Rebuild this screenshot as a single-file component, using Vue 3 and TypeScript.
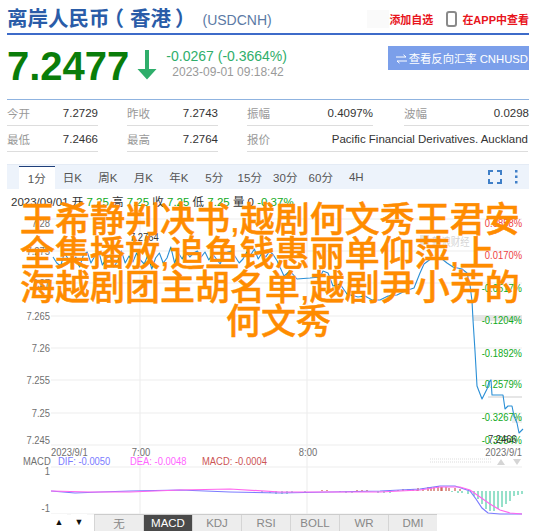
<script setup lang="ts">
const stats = [
  [['今开', '7.2729'], ['昨收', '7.2743'], ['振幅', '0.4097%'], ['波幅', '0.0298']],
  [['最低', '7.2466'], ['最高', '7.2764'], ['报价', 'Pacific Financial Derivatives. Auckland']],
]
const tabs = ['1分', '日K', '周K', '月K', '年K', '5分', '15分', '30分', '60分', '4H']
const indicators = ['无', 'MACD', 'KDJ', 'RSI', 'BOLL', 'WR', 'DMI']

const leftAxis = [
  ['7.28', 226], ['7.275', 254], ['7.27', 286], ['7.265', 319], ['7.26', 351], ['7.255', 383], ['7.25', 416], ['7.245', 443],
] as const
const rightAxis = [
  ['0.0858%', 226, 'rise'], ['0.0170%', 258, 'rise'], ['-0.0517%', 291, 'fall'], ['-0.1204%', 323, 'fall'],
  ['-0.1892%', 356, 'fall'], ['-0.2579%', 387, 'fall'], ['-0.3267%', 420, 'fall'], ['-0.3954%', 443, 'fall'],
] as const
const gridY = [218, 250, 282, 315, 347, 379, 412, 444, 466, 513]

// the chart's canvas text is drawn narrower than the font's natural width
const squeeze = (x: number, y: number) => `translate(${x} ${y}) scale(.82 1)`

const wiggle = [256, 262, 265, 252, 258, 262, 256, 266, 254, 251, 262, 255, 250, 264, 258, 254, 266, 260, 250, 262, 255, 261, 252, 259, 263, 254, 268, 257, 252, 262, 257, 246, 262, 252, 258, 250, 256, 252, 250, 256, 251, 259, 253, 258, 263, 253, 251, 250, 256, 262, 258, 251, 254, 248, 258, 252, 256, 250, 254, 260]
const head = wiggle.map((y, i) => `${53 + i * 3.8},${y}`)
const tail = [
  [284, 275], [290, 270], [297, 278], [310, 277], [320, 276], [323, 270], [328, 272], [333, 285], [340, 283], [347, 293], [358, 296],
  [365, 295], [372, 299], [380, 299], [388, 295], [397, 294], [405, 290], [414, 287], [420, 272], [424, 263], [432, 257], [442, 258],
  [447, 262], [453, 266], [462, 268], [467, 272], [470, 284], [472, 300], [473, 319], [475, 350], [477, 385], [482, 398], [487, 388], [489, 381], [491, 379],
  [492, 394], [503, 394], [505, 408], [508, 405], [512, 405], [514, 415], [517, 422], [519, 432], [523, 428],
].map(([x, y]) => `${x},${y}`)
const priceLine = [...head, ...tail].join(' ')

const magenta = '51,490 90,491 130,491 180,489 230,488 280,491 330,491 380,491 420,489 440,486 460,486 470,489 480,496 490,503 500,509 510,512 522,513'
const blue = '51,490 75,492 100,491 130,490 180,489 230,491 280,492 330,491 380,490 420,488 440,485 455,485 470,490 476,498 482,507 488,512 500,513 522,513'

const redBars = [[322, 1], [327, 1], [357, 1], [362, 1], [367, 1], [398, 1], [403, 2], [408, 2], [413, 2], [418, 3], [423, 3], [417, 1], [428, 4], [431, 4], [434, 4], [438, 5], [442, 4], [446, 4], [449, 3], [455, 3], [460, 2], [441, 4]]
const tealBars = [[262, 2], [270, 2], [276, 3], [282, 3], [287, 3], [292, 2], [305, 2], [340, 1], [346, 2], [352, 2], [378, 2], [384, 2], [390, 2], [452, 1], [458, 2], [462, 2], [468, 3], [474, 5], [478, 8], [482, 13], [486, 18], [490, 20], [494, 20], [498, 18], [502, 16], [506, 13], [510, 10], [514, 5], [518, 4], [522, 3]]

const headlineLines = ['王希静判决书,越剧何文秀王君安', '全集播放,追鱼钱惠丽单仰萍,上', '海越剧团主胡名单,越剧尹小芳的', '何文秀']
</script>

<template>
  <div class="page">
    <header class="title-row">
      <h1 class="title">离岸人民币<span class="paren-open">（</span>香港<span class="paren-close">）</span></h1>
      <span class="code">(USDCNH)</span>
      <div class="actions">
        <span class="smudge"></span>
        <span class="action-link">添加自选</span>
        <svg class="phone" width="11" height="16" viewBox="0 0 11 16">
          <rect x="1" y="1" width="9" height="14" rx="2" fill="#fff" stroke="#8a8a8a" stroke-width="2" />
        </svg>
        <span class="action-link">在APP中查看</span>
      </div>
    </header>

    <section class="quote">
      <span class="price">7.2477</span>
      <svg class="arrow" width="20" height="30" viewBox="0 0 20 30">
        <path d="M8 0h4v19h7.500L10 29.500 .5 19H8z" fill="#2fae6b" />
      </svg>
      <div class="change">
        <div class="delta">-0.0267 (-0.3664%)</div>
        <div class="time">2023-09-01 09:18:42</div>
      </div>
      <button class="reverse">
        <svg class="swap" width="11" height="10" viewBox="0 0 11 10" fill="none" stroke="#fff">
          <path d="M0 3h10L7.500 .8M11 7H1l2.500 2.200" />
        </svg>
        查看反向汇率 CNHUSD
      </button>
    </section>

    <section class="stats">
      <div v-for="(row, r) in stats" :key="r" class="stat-row">
        <div v-for="cell in row" :key="cell[0]" class="stat" :class="{ wide: cell[1].length > 10 }">
          <span class="stat-label">{{ cell[0] }}</span>
          <span class="stat-value">{{ cell[1] }}</span>
        </div>
      </div>
    </section>

    <nav class="tabs">
      <span v-for="(t, i) in tabs" :key="t" class="tab" :class="{ active: i === 0 }">{{ t }}</span>
      <div class="tab-tools">
        <svg width="14" height="14" viewBox="0 0 14 14" fill="none" stroke="#3f7fc8" stroke-width="2">
          <path d="M1 5V1h4M9 1h4v4M13 9v4H9M5 13H1V9" />
        </svg>
        <svg width="4" height="14" viewBox="0 0 4 14" fill="#3f7fc8">
          <rect x="1" y="0" width="2.500" height="2.500" />
          <rect x="1" y="5.500" width="2.500" height="2.500" />
          <rect x="1" y="11" width="2.500" height="2.500" />
        </svg>
      </div>
    </nav>

    <svg class="chart" width="522" height="344" viewBox="7 188 522 344">
      <g stroke="#eeeeee" stroke-width="1.200">
        <line v-for="y in gridY" :key="y" x1="51" x2="522" :y1="y" :y2="y" />
        <line x1="140" x2="140" y1="206" y2="513" />
        <line x1="307" x2="307" y1="206" y2="513" />
      </g>
      <rect x="473" y="314" width="49" height="6" fill="#e6e6e6" />
      <rect x="488" y="395" width="34" height="2" fill="#e6e6e6" />
      <rect x="512" y="415" width="10" height="7" fill="#efefef" />

      <text x="11" y="205" class="info">
        <tspan class="ink">2023/09/01 开 </tspan><tspan class="fall">7.25 </tspan><tspan class="ink">高 </tspan><tspan class="fall">7.25 </tspan><tspan class="ink">收 </tspan><tspan class="fall">7.25 </tspan><tspan class="ink">低 </tspan><tspan class="fall">7.25 </tspan><tspan class="ink">量 0 </tspan><tspan class="fall">-0.37%</tspan>
      </text>

      <text v-for="l in leftAxis" :key="l[0]" :transform="squeeze(50, l[1])" text-anchor="end" class="axis grey">{{ l[0] }}</text>
      <text v-for="l in rightAxis" :key="l[0]" :transform="squeeze(522, l[1])" text-anchor="end" class="axis" :class="l[2]">{{ l[0] }}</text>

      <rect x="420" y="234" width="9" height="10" fill="#e4e4e4" />
      <text :transform="squeeze(432, 245)" class="axis mark">新浪财经</text>
      <text :transform="squeeze(130, 240)" class="axis ink">7.2764</text>
      <text :transform="squeeze(488, 442)" class="axis ink">7.2466</text>

      <polyline :points="priceLine" fill="none" stroke="#2a8fd6" stroke-width="1.100" stroke-linejoin="round" />

      <text :transform="squeeze(51, 455)" class="axis grey">2023/9/1</text>
      <text :transform="squeeze(141, 455)" text-anchor="middle" class="axis grey">7:00</text>
      <text :transform="squeeze(308, 455)" text-anchor="middle" class="axis grey">8:00</text>
      <text :transform="squeeze(522, 455)" text-anchor="end" class="axis grey">2023/9/1</text>

      <text :transform="squeeze(23, 464)" class="axis grey">MACD</text>
      <text :transform="squeeze(58, 464)" class="axis dif">DIF: -0.0050</text>
      <text :transform="squeeze(130, 464)" class="axis dea">DEA: -0.0048</text>
      <text :transform="squeeze(202, 464)" class="axis macd">MACD: -0.0004</text>
      <line x1="430" x2="491" y1="458" y2="458" stroke="#ddd" stroke-dasharray="1 1" />
      <line x1="430" x2="491" y1="461" y2="461" stroke="#ddd" stroke-dasharray="1 1" />
      <path d="M497 464l4-6 4 6zM513 458h8l-4 6z" fill="#d5d5d5" />
      <text :transform="squeeze(50, 474)" text-anchor="end" class="axis grey">1</text>
      <text :transform="squeeze(50, 511)" text-anchor="end" class="axis grey">-1</text>

      <line v-for="b in redBars" :key="'r' + b[0] + b[1]" :x1="b[0]" :x2="b[0]" y1="490" :y2="490 - b[1]" stroke="#c0392b" />
      <line v-for="b in tealBars" :key="'t' + b[0]" :x1="b[0]" :x2="b[0]" y1="490" :y2="490 + b[1]" stroke="#2fc295" />
      <polyline :points="blue" fill="none" stroke="#7b7bff" stroke-width="1.200" />
      <polyline :points="magenta" fill="none" stroke="#ff66ee" stroke-width="1.200" />
      <line x1="51" x2="465" y1="531.500" y2="531.500" stroke="#555" />
      <line x1="515" x2="522" y1="531.500" y2="531.500" stroke="#777" />
    </svg>

    <div class="indicators">
      <button class="step">▲</button>
      <button class="step">▼</button>
      <div class="ind-tabs">
        <span v-for="(t, i) in indicators" :key="t" class="ind" :class="{ on: i === 1 }">{{ t }}</span>
      </div>
    </div>

    <div class="headline">
      <div v-for="line in headlineLines" :key="line" class="headline-line">{{ line }}</div>
    </div>
  </div>
</template>

<style scoped>
.page {
  position: relative;
  box-sizing: border-box;
  width: 550px;
  height: 532px;
  padding: 0 21px 0 7px;
  overflow: hidden;
  background: #fff;
  color: #333;
  font-family: "Liberation Sans", "Noto Sans CJK SC", sans-serif;
}
.title-row {
  display: flex;
  align-items: center;
  box-sizing: border-box;
  height: 35px;
  padding-top: 5px;
  border-bottom: 2px solid #3d6bc9;
}
.title {
  margin: 0;
  font-size: 20.500px;
  line-height: 28px;
  font-weight: 700;
  color: #2a5ca8;
  white-space: nowrap;
}
.paren-open {
  display: inline-block;
  transform: translateX(-6px);
}
.paren-close {
  display: inline-block;
  transform: translateX(4px);
}
.code {
  margin: 2px 0 0 11px;
  font-size: 14px;
  color: #5b7aa5;
}
.actions {
  display: flex;
  align-items: center;
  margin-left: auto;
}
.smudge {
  width: 22px;
  height: 18px;
  background: #fafafa;
}
.action-link {
  font-size: 11px;
  font-weight: 700;
  color: #e8141c;
  white-space: nowrap;
}
.phone {
  margin: 0 5px 0 13px;
}
.quote {
  position: relative;
  display: flex;
  align-items: flex-start;
  height: 64px;
}
.price {
  margin-top: 8px;
  font-size: 40px;
  line-height: 46px;
  font-weight: 700;
  color: #0a7d0a;
}
.arrow {
  margin: 15px 0 0 8px;
}
.change {
  margin: 13px 0 0 9px;
}
.delta {
  font-size: 14px;
  line-height: 16px;
  color: #2fae6b;
  white-space: nowrap;
}
.time {
  margin: 1px 0 0 6px;
  font-size: 12px;
  line-height: 15px;
  color: #9a9a9a;
  white-space: nowrap;
}
.reverse {
  display: flex;
  align-items: center;
  gap: 2px;
  justify-content: flex-end;
  box-sizing: border-box;
  width: 141px;
  height: 24px;
  margin: 11px 0 0 auto;
  padding: 0 1px 0 0;
  border: 0;
  background: #7b9fea;
  color: #fff;
  font: 11.300px "Liberation Sans", "Noto Sans CJK SC", sans-serif;
  white-space: nowrap;
}
.swap {
  margin-top: 2px;
}
.stats {
  border-top: 1px solid #8fb3e0;
}
.stat-row {
  display: flex;
  height: 26px;
}
.stat {
  display: flex;
  align-items: center;
  justify-content: space-between;
  box-sizing: border-box;
  width: 91px;
  height: 26px;
  margin-right: 29px;
  border-bottom: 1px solid #dddddd;
  font-size: 11.500px;
}
.stat:nth-child(3) {
  width: 126px;
  margin-right: 31px;
}
.stat:nth-child(4) {
  width: 125px;
  margin-right: 0;
}
.stat.wide {
  width: 281px;
  margin-right: 0;
}
.stat-label {
  color: #999;
}
.stat-value {
  color: #333;
  white-space: nowrap;
}
.tabs {
  display: flex;
  align-items: stretch;
  height: 24px;
  margin-top: 12px;
  padding-left: 12px;
  border-top: 1px solid #e4ebf5;
  background: #edf3fb;
}
.tab {
  display: flex;
  align-items: center;
  justify-content: center;
  width: 35.500px;
  font-size: 11.500px;
  color: #555;
}
.tab.active {
  margin-top: 1px;
  border-top: 1px solid #1f3f7a;
  background: #fff;
}
.tab-tools {
  display: flex;
  align-items: center;
  gap: 12px;
  margin-left: auto;
  padding-right: 11px;
}
.chart {
  display: block;
}
.info {
  font-size: 11.500px;
}
.axis {
  font-size: 11.500px;
}
.grey {
  fill: #707070;
}
.ink {
  fill: #333;
}
.rise {
  fill: #ee4444;
}
.fall {
  fill: #11aa22;
}
.dif {
  fill: #7b7bff;
}
.dea {
  fill: #ff66ff;
}
.macd {
  fill: #cc5555;
}
.mark {
  fill: #d5d5d5;
}
.indicators {
  position: absolute;
  left: 51px;
  top: 514px;
  display: flex;
  height: 17px;
}
.step {
  width: 16px;
  height: 17px;
  margin-right: 4px;
  padding: 0;
  border: 0;
  background: #fff;
  color: #111;
  font-size: 9px;
  line-height: 17px;
}
.ind-tabs {
  display: flex;
  margin-left: 3px;
  background: #ededed;
  border-top: 1px solid #ccc;
}
.ind {
  display: flex;
  align-items: center;
  justify-content: center;
  box-sizing: border-box;
  width: 49px;
  border-left: 1px solid #d5d5d5;
  color: #888;
  font-size: 11.500px;
}
.ind.on {
  background: #4a4a4a;
  color: #fff;
}
.headline {
  position: absolute;
  left: 20px;
  top: 203px;
  width: 510px;
  color: #ff8c00;
  font-size: 35px;
  line-height: 34px;
  font-weight: 500;
  -webkit-text-stroke: 0.5px #ff8c00;
}
.headline-line {
  white-space: nowrap;
}
.headline-line:last-child {
  padding-left: 206px;
}
</style>
